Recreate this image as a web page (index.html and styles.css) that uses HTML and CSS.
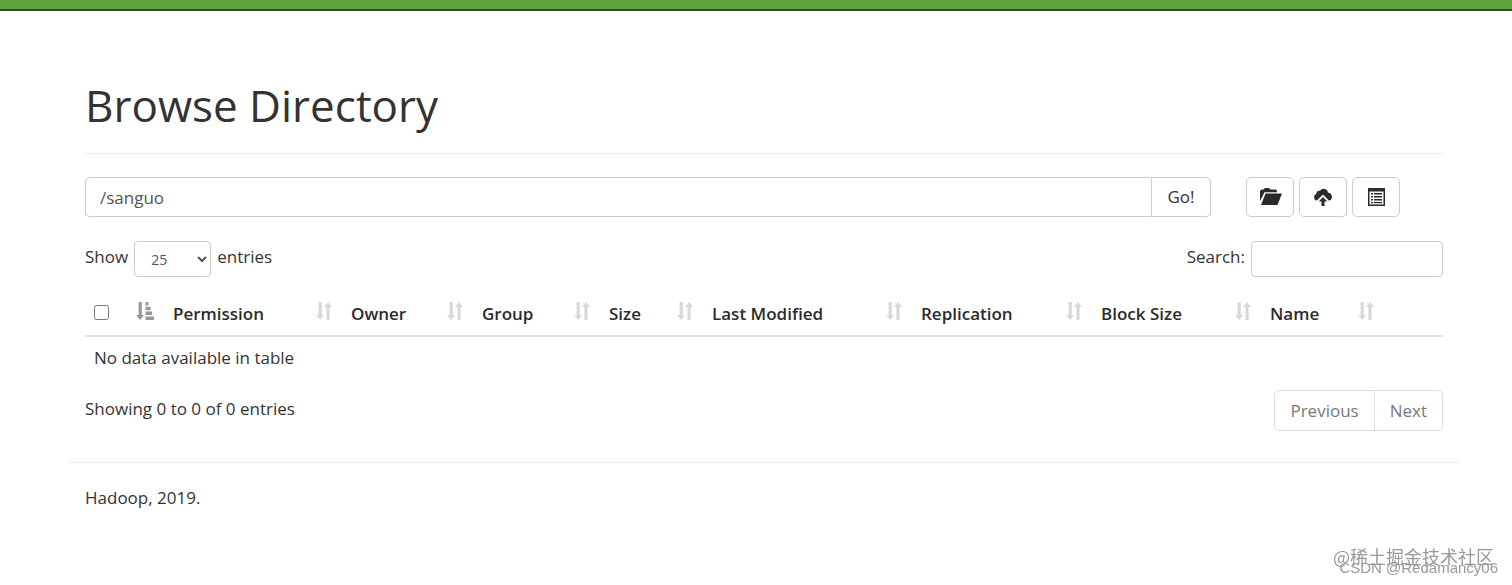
FILE: index.html
```
<!DOCTYPE html>
<html lang="en">
<head>
<meta charset="utf-8">
<title>Browsing HDFS</title>
<link rel="stylesheet" href="styles.css">
</head>
<body>
<svg class="sprite" aria-hidden="true">
  <symbol id="sort" viewBox="0 0 16 18"><path d="M2.600 0h3.200v13H8l-3.800 5L0 13h2.600zM10.400 18h3.200V5H16l-4-5-4 5h2.400z"/></symbol>
  <symbol id="sort-asc" viewBox="0 0 18 18"><path d="M2.600 0h3.200v13H8l-3.800 5L0 13h2.600zM9.500 0h3v3.500h-3zM9.500 4.800h5v3.500h-5zM9.500 9.600h6.500v3.500h-6.500zM9.500 14.400H18V18H9.500z"/></symbol>
</svg>
<header class="navbar"></header>
<main class="container">
  <h1 class="page-title">Browse Directory</h1>
  <div class="toolbar">
    <form class="path-form">
      <input class="path-input" type="text" value="/sanguo" aria-label="Directory">
      <button class="btn go" type="button">Go!</button>
    </form>
    <div class="actions">
      <button class="btn action" type="button" aria-label="Create directory">
        <svg width="24" height="18" viewBox="0 0 24 18"><path d="M2 13V3l1.500-1.500h2L7 0h4l1.500 1.500H18L19 3v1.300H6.500z"/><path d="M7.500 5.500H24L19.500 17H3z"/></svg>
      </button>
      <button class="btn action" type="button" aria-label="Upload files">
        <svg width="18" height="18" viewBox="0 0 18 18"><path d="M2.800 12.400A3.300 3.300 0 0 1 2.300 6C2 3.500 4.500 2.200 6 3c1.500-3.500 7.500-3 8 1.500 5.200.6 5 7.900.9 7.900L9 6.600z"/><path d="M9 9l4.200 4.600h-2.700V18h-3v-4.400H4.800z"/></svg>
      </button>
      <button class="btn action" type="button" aria-label="Cut and paste">
        <svg width="17" height="18" viewBox="0 0 17 18"><path fill-rule="evenodd" d="M0 0h17v18H0zM1.500 3.500v13h14v-13z"/><path d="M3 5h2v1.500H3zM3 8h2v1.500H3zM3 11h2v1.500H3zM3 14h2v1.200H3zM6 5h8v1.500H6zM6 8h8v1.500H6zM6 11h8v1.500H6zM6 14h8v1.200H6z"/></svg>
      </button>
    </div>
  </div>
  <div class="controls">
    <label class="length">Show
      <select class="length-select"><option>25</option><option>50</option><option>100</option></select>
      entries</label>
    <label class="search">Search: <input class="search-input" type="search"></label>
  </div>
  <table class="files">
    <colgroup>
      <col class="w-check"><col class="w-perm"><col class="w-owner"><col class="w-group"><col class="w-size"><col class="w-mod"><col class="w-repl"><col class="w-block"><col class="w-name"><col class="w-trash">
    </colgroup>
    <thead>
      <tr>
        <th><div class="head"><input class="check" type="checkbox" aria-label="Select all"><svg class="sort active"><use href="#sort-asc"/></svg></div></th>
        <th><div class="head">Permission<svg class="sort"><use href="#sort"/></svg></div></th>
        <th><div class="head">Owner<svg class="sort"><use href="#sort"/></svg></div></th>
        <th><div class="head">Group<svg class="sort"><use href="#sort"/></svg></div></th>
        <th><div class="head">Size<svg class="sort"><use href="#sort"/></svg></div></th>
        <th><div class="head">Last Modified<svg class="sort"><use href="#sort"/></svg></div></th>
        <th><div class="head">Replication<svg class="sort"><use href="#sort"/></svg></div></th>
        <th><div class="head">Block Size<svg class="sort"><use href="#sort"/></svg></div></th>
        <th><div class="head">Name<svg class="sort"><use href="#sort"/></svg></div></th>
        <th></th>
      </tr>
    </thead>
    <tbody><tr><td colspan="10">No data available in table</td></tr></tbody>
  </table>
  <div class="summary">
    <p class="info">Showing 0 to 0 of 0 entries</p>
    <nav class="pager"><button class="page" type="button" disabled>Previous</button><button class="page" type="button" disabled>Next</button></nav>
  </div>
</main>
<footer class="footer">Hadoop, 2019.</footer>
<div class="marks"><span class="mark-community">@稀土掘金技术社区</span><span class="mark-author">CSDN @Redamancy06</span></div>
</body>
</html>
```
FILE: styles.css
```
* { box-sizing: border-box; }
body {
  margin: 0;
  background: #fff;
  color: #333;
  font: 17px/26px "Open Sans", "Noto Sans", sans-serif;
}
button, input, select { font: inherit; color: inherit; }
.sprite { display: none; }
.navbar {
  height: 11px;
  background: #5fa33e;
  border-bottom: 2px solid #36472c;
}
.container { margin: 0 52px 0 68px; padding: 65px 17px 31px; }
.page-title {
  margin: 0 0 23px;
  padding-bottom: 19px;
  border-bottom: 1px solid #eee;
  font-size: 44px;
  font-weight: 400;
  line-height: 58px;
}
.toolbar { display: flex; gap: 35px; }
.path-form { display: flex; flex: 1; margin: 0; }
.path-input {
  flex: 1;
  min-width: 0;
  height: 40px;
  padding: 0 14px;
  border: 1px solid #ccc;
  border-radius: 5px 0 0 5px;
  color: #555;
  background: #fff;
}
.btn {
  height: 40px;
  padding: 0 14px;
  border: 1px solid #ccc;
  border-radius: 5px;
  background: #fff;
}
.go { width: 60px; margin-left: -1px; border-radius: 0 5px 5px 0; }
.actions { display: flex; gap: 5px; width: 197px; }
.action {
  display: flex;
  align-items: center;
  justify-content: center;
  width: 48px;
  padding: 0;
  fill: #2b2b2b;
}
.controls {
  display: flex;
  justify-content: space-between;
  margin-top: 24px;
}
.length, .search { display: flex; gap: 6px; line-height: 32px; }
.length-select {
  width: 77px;
  height: 36px;
  padding: 0 12px;
  border: 1px solid #ccc;
  border-radius: 4px;
  background: #fff;
  color: #555;
  font-size: 14px;
}
.search-input {
  width: 192px;
  height: 36px;
  border: 1px solid #ccc;
  border-radius: 4px;
  background: #fff;
}
.files {
  width: 100%;
  margin-top: 14px;
  table-layout: fixed;
  border-collapse: collapse;
}
.w-check { width: 79px; }
.w-perm { width: 178px; }
.w-owner { width: 131px; }
.w-group { width: 127px; }
.w-size { width: 103px; }
.w-mod { width: 209px; }
.w-repl { width: 180px; }
.w-block { width: 169px; }
.w-name { width: 123px; }
.w-trash { width: 59px; }
.files th {
  padding: 10px 10px 8px 9px;
  border-bottom: 2px solid #ddd;
  text-align: left;
  font-weight: 600;
  color: #2b2b2b;
  white-space: nowrap;
}
.files td { padding: 8px 9px; }
.head { display: flex; align-items: center; justify-content: space-between; }
.check { width: 15px; height: 15px; margin: 0 0 4px; }
.sort { width: 16px; height: 18px; margin-bottom: 6px; fill: #d8d8d8; }
.active { width: 18px; fill: #999; }
.summary { display: flex; justify-content: space-between; margin-top: 11px; }
.info { margin: 6px 0 0; }
.pager { display: flex; }
.page {
  height: 41px;
  padding: 0 15px;
  border: 1px solid #ddd;
  background: #fff;
  color: #777;
}
.page:first-child { border-radius: 5px 0 0 5px; }
.page:last-child { margin-left: -1px; border-radius: 0 5px 5px 0; }
.footer {
  margin: 0 52px 0 68px;
  padding: 22px 17px;
  border-top: 1px solid #eee;
}
.marks {
  position: fixed;
  right: 14px;
  bottom: 7px;
  display: grid;
  justify-items: end;
  color: #999;
}
.mark-community {
  margin-right: 4px;
  font: 18px/22px "Noto Sans CJK SC", sans-serif;
}
.mark-author { margin-top: -9px; font: 15px/20px "Liberation Sans", sans-serif; }
```
